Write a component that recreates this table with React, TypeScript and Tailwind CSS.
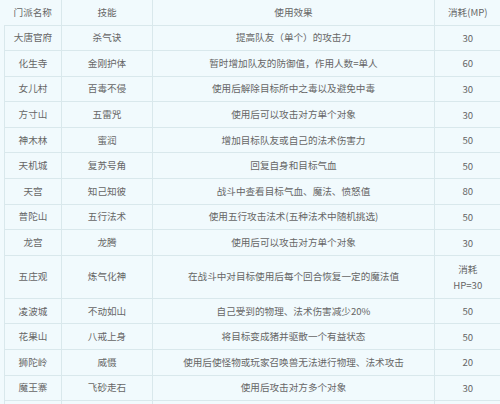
import React from "react";

const rows: { a: string; b: string; c: string; d: React.ReactNode; tall?: boolean }[] = [
  { a: "大唐官府", b: "杀气诀", c: "提高队友（单个）的攻击力", d: "30" },
  { a: "化生寺", b: "金刚护体", c: "暂时增加队友的防御值，作用人数=单人", d: "60" },
  { a: "女儿村", b: "百毒不侵", c: "使用后解除目标所中之毒以及避免中毒", d: "30" },
  { a: "方寸山", b: "五雷咒", c: "使用后可以攻击对方单个对象", d: "30" },
  { a: "神木林", b: "蜜润", c: "增加目标队友或自己的法术伤害力", d: "50" },
  { a: "天机城", b: "复苏号角", c: "回复自身和目标气血", d: "50" },
  { a: "天宫", b: "知己知彼", c: "战斗中查看目标气血、魔法、愤怒值", d: "80" },
  { a: "普陀山", b: "五行法术", c: "使用五行攻击法术(五种法术中随机挑选)", d: "50" },
  { a: "龙宫", b: "龙腾", c: "使用后可以攻击对方单个对象", d: "30" },
  {
    a: "五庄观",
    b: "炼气化神",
    c: "在战斗中对目标使用后每个回合恢复一定的魔法值",
    d: (
      <>
        消耗
        <br />
        HP=30
      </>
    ),
    tall: true,
  },
  { a: "凌波城", b: "不动如山", c: "自己受到的物理、法术伤害减少20%", d: "50" },
  { a: "花果山", b: "八戒上身", c: "将目标变成猪并驱散一个有益状态", d: "50" },
  { a: "狮陀岭", b: "威慑", c: "使用后使怪物或玩家召唤兽无法进行物理、法术攻击", d: "20" },
  { a: "魔王寨", b: "飞砂走石", c: "使用后攻击对方多个对象", d: "30" },
  { a: "", b: "", c: "", d: "" },
];

export default function App() {
  return (
    <div
      className="w-[500px] h-[404px] overflow-hidden bg-[#f1fafd] text-[#666] text-[9.6px] leading-[15px]"
      style={{ fontFamily: '"Noto Sans CJK SC", "Noto Sans", sans-serif' }}
    >
      <table className="ml-[4px] border-collapse table-fixed w-[496px]">
        <colgroup>
          <col className="w-[57px]" />
          <col className="w-[91px]" />
          <col className="w-[282px]" />
          <col className="w-[66px]" />
        </colgroup>
        <thead>
          <tr className="h-[25px]">
            <th className="font-normal border-b border-r border-[#d9e8ec] text-center p-0">门派名称</th>
            <th className="font-normal border-b border-r border-[#d9e8ec] text-center p-0">技能</th>
            <th className="font-normal border-b border-r border-[#d9e8ec] text-center p-0">使用效果</th>
            <th className="font-normal border-b border-[#d9e8ec] text-center p-0">消耗(MP)</th>
          </tr>
        </thead>
        <tbody>
          {rows.map((r, i) => (
            <tr key={i} className={r.tall ? "h-[43px]" : "h-[25.6px]"}>
              <td className="border border-t-0 border-[#d9e8ec] text-center p-0">{r.a}</td>
              <td className="border-b border-r border-[#d9e8ec] text-center p-0">{r.b}</td>
              <td className="border-b border-r border-[#d9e8ec] text-center p-0">{r.c}</td>
              <td className="border-b border-[#d9e8ec] text-center p-0 leading-[16px]">{r.d}</td>
            </tr>
          ))}
        </tbody>
      </table>
    </div>
  );
}
